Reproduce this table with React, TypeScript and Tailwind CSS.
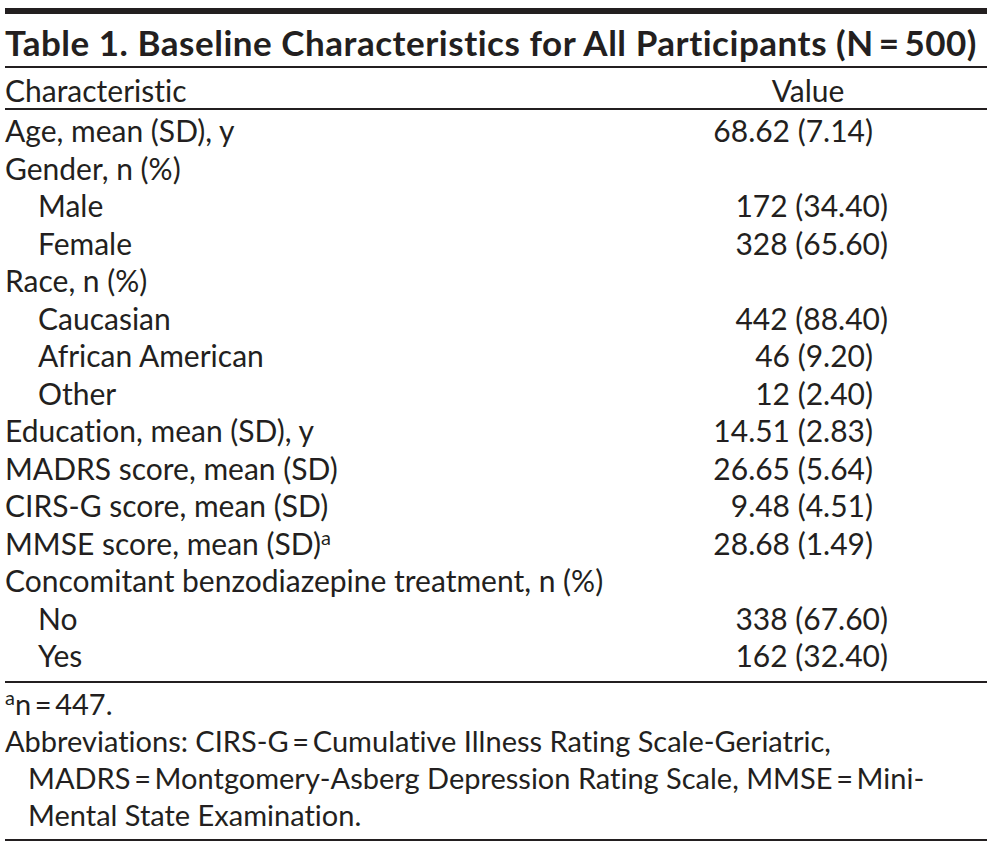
const rows: { label: string; value?: string; indent?: boolean; narrow?: boolean; sup?: string }[] = [
  { label: "Age, mean (SD), y", value: "68.62 (7.14)", narrow: true },
  { label: "Gender, n (%)" },
  { label: "Male", value: "172 (34.40)", indent: true },
  { label: "Female", value: "328 (65.60)", indent: true },
  { label: "Race, n (%)" },
  { label: "Caucasian", value: "442 (88.40)", indent: true },
  { label: "African American", value: "46 (9.20)", indent: true, narrow: true },
  { label: "Other", value: "12 (2.40)", indent: true, narrow: true },
  { label: "Education, mean (SD), y", value: "14.51 (2.83)", narrow: true },
  { label: "MADRS score, mean (SD)", value: "26.65 (5.64)", narrow: true },
  { label: "CIRS-G score, mean (SD)", value: "9.48 (4.51)", narrow: true },
  { label: "MMSE score, mean (SD)", value: "28.68 (1.49)", narrow: true, sup: "a" },
  { label: "Concomitant benzodiazepine treatment, n (%)" },
  { label: "No", value: "338 (67.60)", indent: true },
  { label: "Yes", value: "162 (32.40)", indent: true },
];

export default function App() {
  return (
    <div
      className="min-h-screen bg-white px-[5px] pt-[8px] text-[#231f20] [font-variant-ligatures:none]"
      style={{ fontFamily: "Lato, 'Open Sans', sans-serif" }}
    >
      <div className="h-[6px] bg-[#231f20]" />
      <h1 className="h-[52px] pt-[8px] text-[35px] font-bold leading-[40px] tracking-[0.015em]">
        Table 1. Baseline Characteristics for All Participants (N{"\u2009"}={"\u2009"}500)
      </h1>
      <div className="h-[2px] bg-[#231f20]" />

      {/* header */}
      <div className="flex h-[40px] items-start pt-[4px] text-[30px] leading-[37.5px]">
        <div className="flex-1">Characteristic</div>
        <div className="w-[160px] text-center">Value</div>
        <div className="w-[99px]" />
      </div>
      <div className="h-[2px] bg-[#231f20]" />

      {/* body */}
      <div className="pb-[6px] pt-[2px]">
        {rows.map((row, i) => (
          <div key={i} className="flex h-[37.5px] text-[30px] leading-[37.5px]">
            <div className={`flex-1 ${row.indent ? "pl-[33px]" : ""}`}>
              {row.label}
              {row.sup && <span className="relative -top-[10px] text-[20px] leading-none">{row.sup}</span>}
            </div>
            <div className={`w-[260px] text-right ${row.narrow ? "pr-[15px]" : ""}`}>
              {row.value}
            </div>
            <div className="w-[99px]" />
          </div>
        ))}
      </div>
      <div className="h-[2px] bg-[#231f20]" />

      {/* footnotes */}
      <div className="pb-[6px] pt-[2px] text-[29px] leading-[37px]">
        <div className="h-[37px]">
          <span className="relative -top-[10px] text-[20px] leading-none">a</span>n{"\u2009"}={"\u2009"}447.
        </div>
        <div>
          Abbreviations: CIRS-G{"\u2009"}={"\u2009"}Cumulative Illness Rating Scale-Geriatric,
        </div>
        <div className="pl-[23px]">
          MADRS{"\u2009"}={"\u2009"}Montgomery-Asberg Depression Rating Scale, MMSE{"\u2009"}={"\u2009"}Mini-
        </div>
        <div className="pl-[23px]">Mental State Examination.</div>
      </div>
      <div className="h-[2px] bg-[#231f20]" />
    </div>
  );
}
